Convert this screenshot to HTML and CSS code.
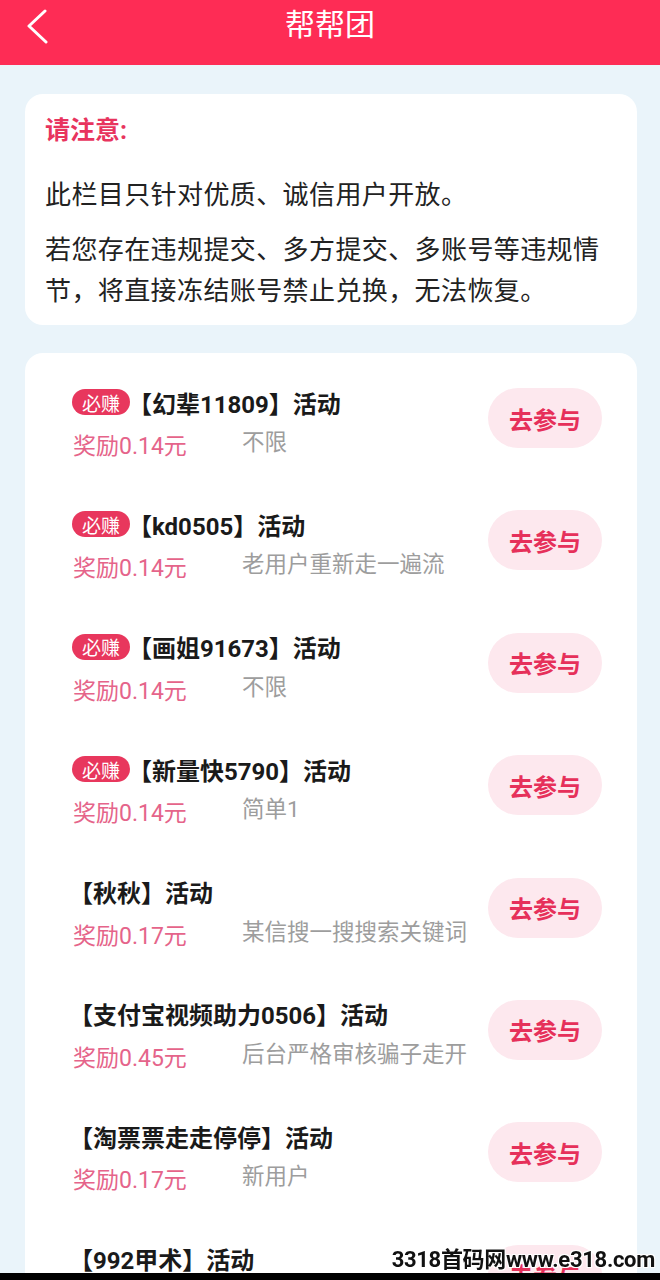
FILE: index.html
```html
<!doctype html>
<html lang="zh-CN">
  <head>
    <meta charset="UTF-8" />
    <meta name="viewport" content="width=device-width, initial-scale=1.0" />
    <title>帮帮团</title>
    <link rel="stylesheet" href="styles.css">
  </head>
  <body>
    <header class="topbar">
      <a class="back" href="#">
        <svg width="24" height="40" viewBox="0 0 24 40">
          <polyline points="19,2 3,17 20,33" fill="none" stroke="#fff" stroke-width="3" stroke-linecap="round" stroke-linejoin="round" />
        </svg>
      </a>
      <h1>帮帮团</h1>
      <span></span>
    </header>

    <main class="page">
      <section class="notice">
        <h2>请注意:</h2>
        <p>此栏目只针对优质、诚信用户开放。</p>
        <p>若您存在违规提交、多方提交、多账号等违规情节，将直接冻结账号禁止兑换，无法恢复。</p>
      </section>

      <section class="tasks">
        <div class="task">
          <div class="task-main">
            <div class="task-title"><span class="badge">必赚</span>【幻辈11809】活动</div>
            <div class="task-info"><span class="reward">奖励0.14元</span><span class="desc">不限</span></div>
          </div>
          <button>去参与</button>
        </div>
        <div class="task">
          <div class="task-main">
            <div class="task-title"><span class="badge">必赚</span>【kd0505】活动</div>
            <div class="task-info"><span class="reward">奖励0.14元</span><span class="desc">老用户重新走一遍流</span></div>
          </div>
          <button>去参与</button>
        </div>
        <div class="task">
          <div class="task-main">
            <div class="task-title"><span class="badge">必赚</span>【画姐91673】活动</div>
            <div class="task-info"><span class="reward">奖励0.14元</span><span class="desc">不限</span></div>
          </div>
          <button>去参与</button>
        </div>
        <div class="task">
          <div class="task-main">
            <div class="task-title"><span class="badge">必赚</span>【新量快5790】活动</div>
            <div class="task-info"><span class="reward">奖励0.14元</span><span class="desc">简单1</span></div>
          </div>
          <button>去参与</button>
        </div>
        <div class="task">
          <div class="task-main">
            <div class="task-title">【秋秋】活动</div>
            <div class="task-info"><span class="reward">奖励0.17元</span><span class="desc">某信搜一搜搜索关键词</span></div>
          </div>
          <button>去参与</button>
        </div>
        <div class="task">
          <div class="task-main">
            <div class="task-title">【支付宝视频助力0506】活动</div>
            <div class="task-info"><span class="reward">奖励0.45元</span><span class="desc">后台严格审核骗子走开</span></div>
          </div>
          <button>去参与</button>
        </div>
        <div class="task">
          <div class="task-main">
            <div class="task-title">【淘票票走走停停】活动</div>
            <div class="task-info"><span class="reward">奖励0.17元</span><span class="desc">新用户</span></div>
          </div>
          <button>去参与</button>
        </div>
        <div class="task">
          <div class="task-main">
            <div class="task-title">【992甲术】活动</div>
            <div class="task-info"><span class="reward">奖励0.17元</span><span class="desc">新用户</span></div>
          </div>
          <button>去参与</button>
        </div>
      </section>
    </main>

    <div class="watermark">3318首码网www.e318.com</div>
    <div class="bottom-bar"></div>
  </body>
</html>
```

FILE: styles.css
```css
body {
  margin: 0;
  background: #eaf4fa;
  font-family: Roboto, "Noto Sans CJK SC", sans-serif;
  color: #222;
}
.topbar {
  display: grid;
  grid-template-columns: 1fr auto 1fr;
  align-items: center;
  height: 50px;
  padding-bottom: 15px;
  background: #fe2c55;
  color: #fff;
}
.back {
  display: flex;
  padding-left: 26px;
  padding-top: 8px;
}
.topbar h1 {
  margin: 0;
  font-size: 30px;
  font-weight: 400;
  line-height: 50px;
}
.page {
  margin: 0 23px 0 25px;
}
.notice {
  margin-top: 29px;
  background: #fff;
  border-radius: 18px;
  padding: 22px 20px 13px;
}
.notice h2 {
  margin: 0;
  color: #e8345e;
  font-size: 25px;
  line-height: 30px;
  font-weight: 700;
}
.notice p {
  margin: 0;
  font-size: 26px;
  line-height: 41px;
  letter-spacing: 0.4px;
}
.notice h2 + p {
  margin-top: 29px;
}
.notice p + p {
  margin-top: 14px;
}
.tasks {
  margin-top: 28px;
  background: #fff;
  border-radius: 18px 18px 0 0;
  padding-top: 10px;
}
.task {
  display: flex;
  align-items: flex-start;
  justify-content: space-between;
  padding: 24px 35px 23.4px 44px;
}
.task-title {
  display: flex;
  align-items: center;
  height: 30px;
  font-size: 24px;
  font-weight: 700;
  color: #1a1a1a;
  white-space: nowrap;
}
.badge {
  display: inline-flex;
  align-items: center;
  height: 26px;
  margin-left: 3px;
  margin-right: -2px;
  padding: 0 10px;
  border-radius: 13px;
  background: #e8375d;
  color: #fff;
  font-size: 19px;
  font-weight: 400;
}
.task-info {
  display: flex;
  align-items: flex-start;
  margin-top: 10px;
  font-size: 22.5px;
  line-height: 30px;
}
.reward {
  width: 169px;
  margin-top: 5px;
  padding-left: 4px;
  font-size: 23px;
  color: #e5648a;
}
.desc {
  color: #9d9d9d;
}
button {
  margin-top: 1px;
  width: 114px;
  height: 60px;
  border: none;
  border-radius: 30px;
  background: #fde8ee;
  color: #e6305a;
  font-family: inherit;
  font-size: 24px;
  font-weight: 700;
  cursor: pointer;
}
.watermark {
  position: fixed;
  right: 5px;
  bottom: 7px;
  font-size: 22px;
  font-weight: 700;
  color: #111;
  letter-spacing: -0.3px;
  text-shadow: -1px -1px 0 #fff, 1px -1px 0 #fff, -1px 1px 0 #fff, 1px 1px 0 #fff;
}
.bottom-bar {
  position: fixed;
  left: 0;
  right: 0;
  bottom: 0;
  height: 7px;
  background: #000;
}
```
